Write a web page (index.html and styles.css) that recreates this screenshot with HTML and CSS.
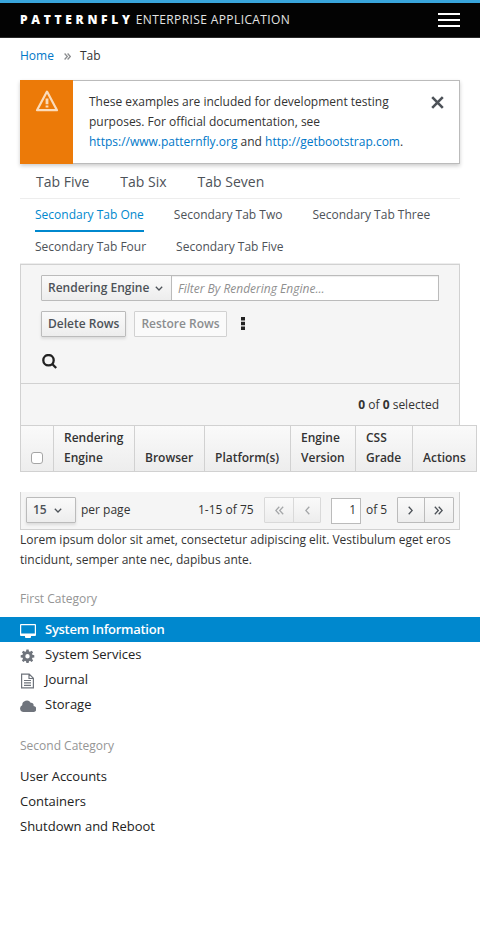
FILE: index.html
```html
<!DOCTYPE html>
<html lang="en">
<head>
<meta charset="utf-8">
<title>PatternFly Enterprise Application</title>
<link rel="stylesheet" href="styles.css">
</head>
<body>
<header class="navbar">
  <div class="brand"><b>PATTERNFLY</b><span>ENTERPRISE APPLICATION</span></div>
  <div class="burger"><i></i><i></i><i></i></div>
</header>
<main>
  <nav class="breadcrumb"><a>Home</a><svg width="7" height="7" viewBox="0 0 7 7"><path d="M.6.5 3.3 3.5.6 6.5M3.6.5 6.3 3.5 3.6 6.5"/></svg><span>Tab</span></nav>
  <section class="toast">
    <div class="toast-icon"><svg width="24" height="24" viewBox="0 0 24 24"><path d="M12 2.600 22 21.200H2Z" fill="none" stroke="#fbdcbb" stroke-width="2.200" stroke-linejoin="round"/><path d="M10.600 9.600h2.800v5.600h-2.800zM10.600 16.400h2.800v2h-2.800z" fill="#fbdcbb"/></svg></div>
    <p>These examples are included for development testing purposes. For official documentation, see <a>https://www.patternfly.org</a> and <a>http://getbootstrap.com</a>.</p>
    <svg class="close" width="13" height="13" viewBox="0 0 13 13"><path d="M1.2 1.2 11.8 11.8M11.8 1.2 1.2 11.8"/></svg>
  </section>
  <nav class="tabs"><a>Tab Five</a><a>Tab Six</a><a>Tab Seven</a></nav>
  <nav class="subtabs"><a class="active">Secondary Tab One</a><a>Secondary Tab Two</a><a>Secondary Tab Three</a><a>Secondary Tab Four</a><a>Secondary Tab Five</a></nav>
  <section class="toolbar">
    <div class="filter">
      <button class="btn engine">Rendering Engine<svg width="8" height="5" viewBox="0 0 8 5"><path d="M.8.8 4 4 7.2.8"/></svg></button>
      <div class="input">Filter By Rendering Engine...</div>
    </div>
    <div class="actions">
      <button class="btn raised">Delete Rows</button>
      <button class="btn disabled">Restore Rows</button>
      <svg class="kebab" width="4" height="13" viewBox="0 0 4 13"><path d="M0 0h4v3.4H0zM0 4.8h4v3.4H0zM0 9.6h4V13H0z"/></svg>
    </div>
    <svg class="search" width="15" height="15" viewBox="0 0 15 15"><circle cx="6.5" cy="6.2" r="5.2"/><path d="M10.200 10 14.200 14"/></svg>
  </section>
  <div class="results"><span><b>0</b> of <b>0</b> selected</span></div>
  <div class="thead">
    <div><span class="check"></span></div>
    <div>Rendering<br>Engine</div>
    <div>Browser</div>
    <div>Platform(s)</div>
    <div>Engine<br>Version</div>
    <div>CSS<br>Grade</div>
    <div>Actions</div>
  </div>
  <footer class="pager">
    <button class="btn raised size">15<svg width="8" height="5" viewBox="0 0 8 5"><path d="M.8.8 4 4 7.2.8"/></svg></button>
    <span class="per">per page</span>
    <span class="range">1-15 of 75</span>
    <div class="group off">
      <span><svg width="9" height="9" viewBox="0 0 9 9"><path d="M4.3.7.8 4.5 4.3 8.3M8.2.7 4.7 4.5 8.2 8.3"/></svg></span>
      <span><svg width="5" height="9" viewBox="0 0 5 9"><path d="M4.3.7.8 4.5 4.3 8.3"/></svg></span>
    </div>
    <div class="page">1</div>
    <span class="of">of 5</span>
    <div class="group on">
      <span><svg width="5" height="9" viewBox="0 0 5 9"><path d="M.7.7 4.2 4.5.7 8.3"/></svg></span>
      <span><svg width="9" height="9" viewBox="0 0 9 9"><path d="M.8.7 4.3 4.5.8 8.3M4.7.7 8.2 4.5 4.7 8.3"/></svg></span>
    </div>
  </footer>
  <p class="lorem">Lorem ipsum dolor sit amet, consectetur adipiscing elit. Vestibulum eget eros tincidunt, semper ante nec, dapibus ante.</p>
</main>
<aside>
  <h2>First Category</h2>
  <ul>
    <li class="active"><svg width="16" height="14" viewBox="0 0 16 14"><path fill-rule="evenodd" d="M1 0h14q1 0 1 1v10q0 1-1 1h-4v1.200q0 .8-1 .8H6q-1 0-1-.8V12H1q-1 0-1-1V1Q0 0 1 0ZM1.200 1.200v8.300h13.600V1.200Z"/></svg>System Information</li>
    <li><svg width="16" height="14" viewBox="-1 -.5 16 14"><path fill-rule="evenodd" d="M5.400 0h2.200l.4 1.900 1 .4 1.600-1.100 1.500 1.500L11 4.300l.4 1 1.900.4v2.200l-1.900.4-.4 1 1.100 1.600-1.500 1.500L9 11.300l-1 .4-.4 1.800H5.400L5 11.700l-1-.4-1.600 1.100-1.500-1.500L2 9.300l-.4-1L-.300 7.900V5.700l1.900-.4.4-1L.900 2.700l1.500-1.500L4 2.300l1-.4ZM6.500 4.600a2.200 2.200 0 1 0 0 4.400a2.200 2.200 0 0 0 0-4.400Z"/></svg>System Services</li>
    <li><svg width="16" height="16" viewBox="0 0 16 16"><path fill="none" stroke="#6f747c" stroke-width="1.200" d="M1.600 1.100h7.600l4.200 4.200v9.500H1.600ZM9 1.300v4.200h4.200M4 7.500h7M4 9.900h7M4 12.300h7"/></svg>Journal</li>
    <li><svg width="16" height="12" viewBox="0 0 16 12"><path d="M3.500 12A3.500 3.500 0 0 1 2.200 5.300 4.600 4.600 0 0 1 10.700 2.800 2.500 2.500 0 0 1 13.500 6 3 3 0 0 1 13 12Z"/></svg>Storage</li>
  </ul>
  <h2 class="second">Second Category</h2>
  <ul class="plain"><li>User Accounts</li><li>Containers</li><li>Shutdown and Reboot</li></ul>
</aside>
</body>
</html>
```
FILE: styles.css
```css
* { box-sizing: border-box; }
body { margin: 0; font: 12px/20px "Open Sans", sans-serif; color: #333; background: #fff; }
svg { display: block; flex: none; fill: none; }
a { color: #0077c8; }
p { margin: 0; }
b { font-weight: 700; }
.navbar { height: 38px; background: #030303; border-top: 3px solid #39a5dc; border-bottom: 1px solid #292929; padding: 0 20px; display: flex; justify-content: space-between; align-items: center; color: #fff; }
.brand { display: flex; gap: 2px; font-size: 12px; }
.brand b { font-weight: 800; letter-spacing: 3.7px; }
.brand span { color: #e4e4e4; letter-spacing: .4px; }
.burger { display: grid; gap: 4px; width: 22px; }
.burger i { height: 2px; background: #fff; }
main { padding: 0 20px; }
.breadcrumb { display: flex; align-items: center; height: 42px; padding-bottom: 6px; }
.breadcrumb svg { margin: 1px 9px 0 10px; stroke: #8b8d8f; stroke-width: 1.3; }
.toast { height: 84px; display: flex; border: 1px solid #bbb; border-left: 0; box-shadow: 0 2px 4px rgba(3,3,3,.2); }
.toast-icon { width: 53px; margin: -1px 0; background: #ec7a08; display: flex; justify-content: center; padding-top: 9px; }
.toast p { width: 330px; margin: 11px 0 0 16px; }
.close { margin: 15px 0 0 12px; stroke: #4d5258; stroke-width: 2.6; }
.tabs { height: 35px; border-bottom: 1px solid #ededed; display: flex; gap: 31px; padding: 8px 16px 0; font-size: 14px; }
.tabs a, .subtabs a { color: #4d5258; }
.subtabs { height: 65px; border-bottom: 1px solid #ededed; display: flex; flex-wrap: wrap; align-content: flex-start; column-gap: 30px; padding-left: 15px; }
.subtabs a { height: 32px; padding-top: 6px; }
.subtabs a.active { color: #0088ce; box-shadow: inset 0 -2px #0088ce; height: 33px; margin-bottom: -1px; }
.toolbar { background: #f5f5f5; border: 1px solid #d1d1d1; height: 120px; padding: 10px 20px; }
.btn { font: 600 12px/20px "Open Sans", sans-serif; height: 26px; border: 1px solid #bbb; border-radius: 1px; color: #4d5258; background: linear-gradient(#fafafa, #ededed); padding: 0 6px 1px; display: flex; align-items: center; }
.btn svg { stroke: #4d5258; stroke-width: 1.3; margin-top: 1px; }
.raised { box-shadow: 0 2px 3px rgba(3,3,3,.1); }
.disabled { background: #fafafa; border-color: #d1d1d1; color: #8b8d8f; }
.filter, .actions { display: flex; }
.engine { width: 131px; justify-content: space-between; padding-right: 8px; }
.input { flex: 1; height: 26px; margin-left: -1px; padding: 3px 6px; border: 1px solid #bbb; background: #fff; color: #8f8f8f; font-style: italic; box-shadow: inset 0 1px 1px rgba(3,3,3,.07); }
.actions { margin-top: 10px; align-items: center; gap: 8px; }
.kebab { margin-left: 6px; margin-top: -1px; fill: #222; }
.search { margin: 17px 0 0 1px; stroke: #222; stroke-width: 2.3; }
.results { background: #f5f5f5; border: 1px solid #d1d1d1; border-width: 0 1px; height: 41px; display: flex; justify-content: flex-end; align-items: center; padding: 0 20px 0; }
.thead { width: 457px; height: 47px; border: 1px solid #d1d1d1; background: linear-gradient(#fafafa, #ededed); display: grid; grid-template-columns: 32px 81px 70px 86px 65px 57px 1fr; font-weight: 600; }
.thead div { border-left: 1px solid #d1d1d1; padding: 2px 0 3px 10px; display: flex; align-items: flex-end; white-space: nowrap; }
.thead div:first-child { border: 0; }
.check { width: 12px; height: 12px; margin-bottom: 4px; border: 1px solid #a5a5a5; border-radius: 3px; background: #fff; }
.pager { margin-top: 20px; height: 38px; background: #f5f5f5; border: 1px solid #d1d1d1; border-top: 0; display: flex; padding: 5px 5px 0; line-height: 26px; }
.size { width: 50px; gap: 7px; }
.per { margin-left: 5px; }
.range { margin-left: auto; width: 66px; white-space: nowrap; }
.group { display: flex; height: 26px; border: 1px solid #bbb; border-radius: 1px; background: linear-gradient(#fafafa, #ededed); }
.group span { display: flex; align-items: center; justify-content: center; }
.group svg { stroke: #4d5258; stroke-width: 1.3; }
.group span + span { border-left: 1px solid #bbb; }
.off { width: 57px; }
.off span { width: 29px; }
.off span + span { width: 27px; }
.off, .off span + span { border-color: #d9d9d9; }
.off svg { stroke: #a5a7a9; }
.on { width: 57px; }
.on span { width: 26px; }
.on span + span { width: 30px; }
.page { width: 30px; height: 26px; margin: 1px 5px 0 10px; background: #fff; border: 1px solid #bbb; text-align: right; padding-right: 4px; line-height: 22px; }
.of { width: 31px; }
h2 { font-size: 12px; line-height: 20px; font-weight: 400; color: #959595; margin: 19px 20px 8px; }
ul { list-style: none; margin: 0; padding: 0; font-size: 13px; }
li { height: 25px; padding: 0 20px 2px; display: flex; align-items: center; gap: 9px; color: #222; }
li svg { fill: #6f747c; margin-top: 4px; }
li.active { background: #0088ce; color: #fff; font-weight: 600; letter-spacing: -.27px; }
li.active svg { fill: #fff; }
.second { margin-top: 19px; margin-bottom: 8px; }
```
